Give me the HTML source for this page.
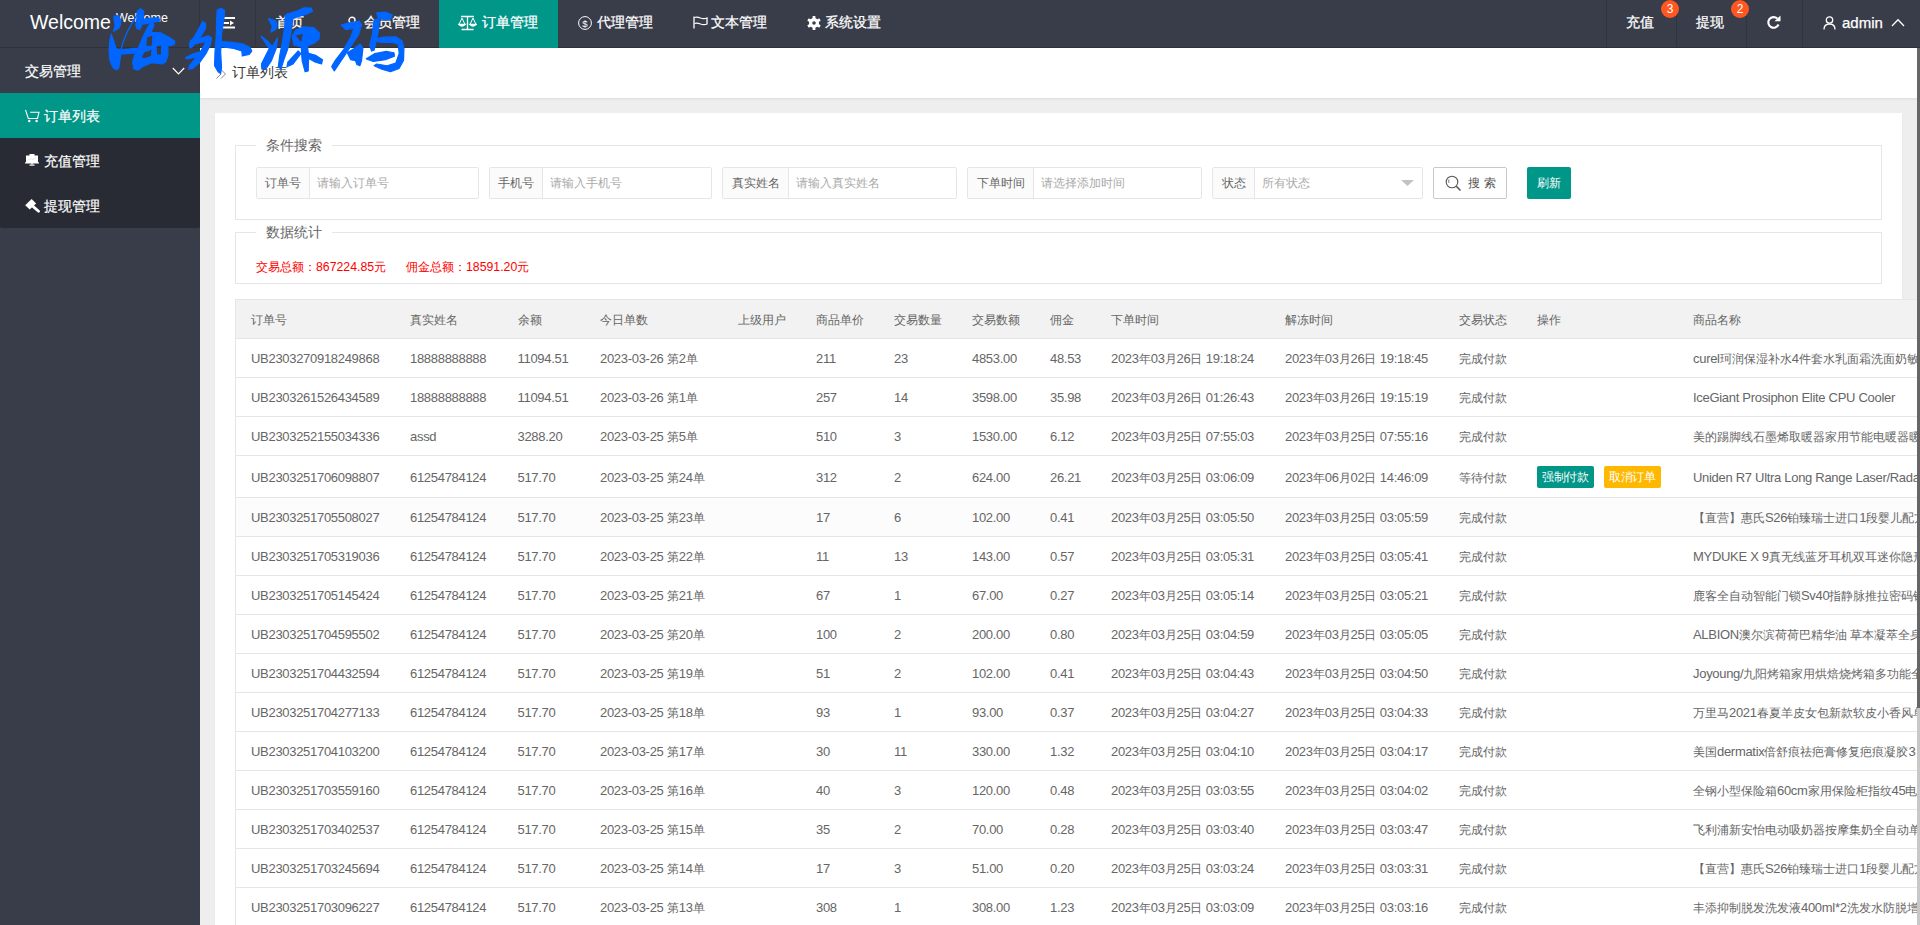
<!DOCTYPE html>
<html><head><meta charset="utf-8"><title>订单列表</title>
<style>
*{margin:0;padding:0;box-sizing:border-box}
html,body{width:1920px;height:925px;overflow:hidden}
body{position:relative;background:#eeeeee;font-family:"Liberation Sans",sans-serif;color:#666}
.hdr{position:absolute;left:0;top:0;width:1920px;height:48px;background:#393D49;color:#fff}
.hdr .sep{position:absolute;top:0;width:1px;height:48px;background:#30343e}
.hdr .t{position:absolute;top:0;line-height:45px;-webkit-text-stroke:0.25px #fff;font-size:14px;white-space:nowrap;color:#fff}
.hdr .ico{position:absolute}
.logo{position:absolute;left:30px;top:0;line-height:44px;font-size:19.5px;color:#fff}
.logo2{position:absolute;left:116px;top:8px;line-height:20px;font-size:12.5px;color:#fff}
.act{position:absolute;left:439px;top:0;width:119px;height:48px;background:#009688}
.badge{position:absolute;width:18px;height:18px;border-radius:9px;background:#FF5722;color:#fff;font-size:12px;line-height:18px;text-align:center}
.side{position:absolute;left:0;top:48px;width:200px;height:877px;background:#393D49}
.side .it{position:absolute;left:0;width:200px;height:45px;line-height:47px;color:#fff;font-size:14px;-webkit-text-stroke:0.2px #fff}
.side .child{position:absolute;left:0;top:45px;width:200px;height:135px;background:#282B33;border-radius:0 0 2px 2px}
.crumb{position:absolute;left:200px;top:48px;width:1717px;height:50px;background:#fff;box-shadow:0 1px 2px rgba(0,0,0,.08)}
.crumb .t{position:absolute;left:32px;top:0;line-height:48px;font-size:14px;color:#333}
.card{position:absolute;left:215px;top:113px;width:1687px;height:830px;background:#fff;box-shadow:0 1px 2px rgba(0,0,0,.05)}
.fs{position:absolute;border:1px solid #e6e6e6}
.fs .lg{position:absolute;top:-11px;background:#fff;padding:0 10px;font-size:14px;line-height:20px;color:#666}
.ig{position:absolute;top:167px;height:32px;border:1px solid #e6e6e6;border-radius:2px;background:#fff}
.ig .lb{position:absolute;left:0;top:0;height:30px;line-height:30px;background:#FBFBFB;border-right:1px solid #e6e6e6;font-size:12px;color:#666;text-align:center}
.ig .ph{position:absolute;top:0;line-height:30px;font-size:12px;color:#aaa;white-space:nowrap}
.btn-s{position:absolute;left:1433px;top:167px;width:74px;height:32px;border:1px solid #C9C9C9;border-radius:2px;background:#fff;color:#555}
.btn-r{position:absolute;left:1527px;top:167px;width:44px;height:32px;border-radius:2px;background:#009688;color:#fff;font-size:12px;line-height:32px;text-align:center}
.stat{position:absolute;top:258px;line-height:18px;font-size:12.3px;color:#FF0000;white-space:nowrap}
.tbl{position:absolute;left:235px;top:299px;width:1682px;height:626px;overflow:hidden;background:#fff;border-left:1px solid #e6e6e6}
.thead{position:absolute;left:0;top:0;width:100%;height:40px;background:#F2F2F2;border-top:1px solid #e6e6e6;border-bottom:1px solid #e6e6e6}
.tr{position:absolute;left:0;width:100%;border-bottom:1px solid #e6e6e6;background:#fff}
.tr.hov{background:#FCFCFC}
.c{position:absolute;top:1px;white-space:nowrap;font-size:13px;letter-spacing:-0.3px;color:#666}
.thead .c{line-height:38px}
.tr .c{line-height:inherit}
.btns{display:block}
.bx{font-style:normal;display:inline-block;vertical-align:top;margin-top:9px;height:22px;line-height:22px;padding:0 5px;font-size:12px;color:#fff;border-radius:2px;margin-right:10px}
.bx.g{background:#009688}.bx.o{background:#FFB800}
.sb{position:absolute;left:1917px;top:48px;width:3px;height:877px;background:#C8C8C8}
.sb i{position:absolute;left:0;top:0;width:3px;height:660px;background:#666}
.wm{position:absolute;left:0;top:0}
.c b.z{font-weight:normal;font-size:12px;letter-spacing:0}

</style></head><body>
<div class="hdr">
  <div style="position:absolute;left:0;top:47px;width:1920px;height:1px;background:#2f323c"></div>
  <div class="logo">Welcome</div>
  <div class="logo2">Welcome</div>
  <div class="sep" style="left:199px"></div>
  <div class="sep" style="left:255px"></div>
  <div class="act"></div>
  <!-- menu toggle -->
  <svg class="ico" style="left:222px;top:16px" width="14" height="14" viewBox="0 0 14 14"><rect x="2" y="1" width="11" height="2" fill="#fff"/><rect x="1" y="6" width="6" height="2" fill="#fff"/><path d="M8 4.6 L12 7 L8 9.4Z" fill="#fff"/><rect x="1" y="10.5" width="12" height="2" fill="#fff"/></svg>
  <div class="t" style="left:276px">首页</div>
  <!-- user icon -->
  <svg class="ico" style="left:345px;top:16px" width="14" height="14" viewBox="0 0 14 14" fill="none" stroke="#fff" stroke-width="1.4"><circle cx="7" cy="4.3" r="3"/><path d="M1.5 13.5 C1.5 9.5 4 7.8 7 7.8 C10 7.8 12.5 9.5 12.5 13.5"/></svg>
  <div class="t" style="left:364px">会员管理</div>
  <!-- scale icon -->
  <svg class="ico" style="left:458px;top:15px" width="19" height="16" viewBox="0 0 19 16" fill="none" stroke="#fff" stroke-width="1.3"><path d="M3 1.5 H16 M9.5 1 V14.5 M3.5 14.5 H15.5"/><path d="M4 3 L1 9.5 H7 Z M15 3 L12 9.5 H18 Z" stroke-width="1"/><path d="M1 9.5 Q4 12.5 7 9.5 Z M12 9.5 Q15 12.5 18 9.5 Z" fill="#fff"/></svg>
  <div class="t" style="left:482px">订单管理</div>
  <!-- dollar icon -->
  <svg class="ico" style="left:578px;top:16px" width="14" height="14" viewBox="0 0 14 14" fill="none" stroke="#fff" stroke-width="1"><circle cx="7" cy="7" r="6.4"/><text x="7" y="10.5" font-size="9.5" font-family="Liberation Sans" fill="#fff" stroke="none" text-anchor="middle">$</text></svg>
  <div class="t" style="left:597px">代理管理</div>
  <!-- flag icon -->
  <svg class="ico" style="left:693px;top:16px" width="15" height="13" viewBox="0 0 15 13" fill="none" stroke="#fff" stroke-width="1.3"><path d="M1 0.5 V12.5"/><path d="M1.5 1.5 Q4 0.5 7.5 2 Q11 3.3 14 2 V8 Q11 9.3 7.5 8 Q4 6.6 1.5 7.5"/></svg>
  <div class="t" style="left:711px">文本管理</div>
  <!-- gear icon -->
  <svg class="ico" style="left:807px;top:16px" width="14" height="14" viewBox="0 0 14 14"><g fill="#fff"><circle cx="7" cy="7" r="5"/><rect x="5.6" y="0" width="2.8" height="14" rx="0.6"/><rect x="5.6" y="0" width="2.8" height="14" rx="0.6" transform="rotate(60 7 7)"/><rect x="5.6" y="0" width="2.8" height="14" rx="0.6" transform="rotate(120 7 7)"/></g><circle cx="7" cy="7" r="1.8" fill="#393D49"/></svg>
  <div class="t" style="left:825px">系统设置</div>

  <div class="sep" style="left:1606px"></div>
  <div class="sep" style="left:1676px"></div>
  <div class="sep" style="left:1746px"></div>
  <div class="sep" style="left:1802px"></div>
  <div class="t" style="left:1626px">充值</div>
  <div class="badge" style="left:1661px;top:0px">3</div>
  <div class="t" style="left:1696px">提现</div>
  <div class="badge" style="left:1731px;top:0px">2</div>
  <!-- refresh -->
  <svg class="ico" style="left:1766px;top:15px" width="16" height="15" viewBox="0 0 16 15" fill="none"><path d="M12.5 9.5 A5.3 5.3 0 1 1 11.3 3.6" stroke="#fff" stroke-width="2.1"/><path d="M8.5 6.3 L14.5 6.3 L14.5 0.5 Z" fill="#fff"/></svg>
  <!-- user -->
  <svg class="ico" style="left:1823px;top:16px" width="13" height="14" viewBox="0 0 13 14" fill="none" stroke="#fff" stroke-width="1.3"><circle cx="6.5" cy="4" r="3.2"/><path d="M1 13.5 C1 9.7 3.4 8 6.5 8 C9.6 8 12 9.7 12 13.5"/></svg>
  <div class="t" style="left:1842px;font-size:15px">admin</div>
  <svg class="ico" style="left:1891px;top:18px" width="14" height="9" viewBox="0 0 14 9" fill="none" stroke="#fff" stroke-width="1.3"><path d="M1 8 L7 1.8 L13 8"/></svg>
</div>

<div class="side">
  <div class="it" style="top:0"><span style="position:absolute;left:25px">交易管理</span>
    <svg style="position:absolute;left:172px;top:19px" width="13" height="8" viewBox="0 0 13 8" fill="none" stroke="#fff" stroke-width="1.2"><path d="M0.8 1 L6.5 6.8 L12.2 1"/></svg></div>
  <div class="child"></div>
  <div class="it" style="top:45px;background:#009688">
    <svg style="position:absolute;left:25px;top:16px" width="15" height="14" viewBox="0 0 15 14" fill="none" stroke="#fff" stroke-width="1.1"><path d="M0.5 0.8 L3.3 9.5 H12.5 L14 3.3 H5.2"/><circle cx="4.3" cy="12" r="1.2" fill="#fff" stroke="none"/><circle cx="11.6" cy="12" r="1.2" fill="#fff" stroke="none"/></svg>
    <span style="position:absolute;left:44px">订单列表</span></div>
  <div class="it" style="top:90px">
    <svg style="position:absolute;left:25px;top:16px" width="14" height="12" viewBox="0 0 14 12"><rect x="1" y="1.5" width="12" height="7.5" fill="#fff"/><rect x="4.5" y="0" width="5" height="2" fill="#fff"/><rect x="0" y="8.3" width="14" height="1.2" fill="#fff"/><rect x="6.3" y="9" width="1.4" height="1.5" fill="#fff"/><rect x="4.5" y="10.5" width="5" height="1.2" fill="#fff"/><path d="M3 6 L5.5 4.6 L8 5.6 L11 3.5" stroke="#ddd" stroke-width="0.7" fill="none"/></svg>
    <span style="position:absolute;left:44px">充值管理</span></div>
  <div class="it" style="top:135px">
    <svg style="position:absolute;left:25px;top:15px" width="16" height="16" viewBox="0 0 16 16"><path d="M0.2,7.2 L6.6,1.1 L11.1,5.6 L4.7,11.5 Z" fill="#fff"/><path d="M8.2,8.6 L13.6,13.2" stroke="#fff" stroke-width="2.8" stroke-linecap="round"/></svg>
    <span style="position:absolute;left:44px">提现管理</span></div>
</div>

<div class="crumb">
  <svg style="position:absolute;left:16px;top:21px" width="11" height="10" viewBox="0 0 11 10" fill="none" stroke="#888" stroke-width="1"><path d="M0.5 9.5 L5 5 L0.5 0.5 M5 9.5 L9.5 5 L5 0.5"/></svg>
  <div class="t">订单列表</div>
</div>

<div class="card"></div>

<div class="fs" style="left:235px;top:145px;width:1647px;height:75px"><div class="lg" style="left:20px">条件搜索</div></div>
<div class="fs" style="left:235px;top:232px;width:1647px;height:52px"><div class="lg" style="left:20px">数据统计</div></div>

<div class="ig" style="left:256px;width:223px"><div class="lb" style="width:53px">订单号</div><div class="ph" style="left:60px">请输入订单号</div></div>
<div class="ig" style="left:489px;width:223px"><div class="lb" style="width:53px">手机号</div><div class="ph" style="left:60px">请输入手机号</div></div>
<div class="ig" style="left:722px;width:235px"><div class="lb" style="width:66px">真实姓名</div><div class="ph" style="left:73px">请输入真实姓名</div></div>
<div class="ig" style="left:967px;width:235px"><div class="lb" style="width:66px">下单时间</div><div class="ph" style="left:73px">请选择添加时间</div></div>
<div class="ig" style="left:1212px;width:211px"><div class="lb" style="width:42px">状态</div><div class="ph" style="left:49px">所有状态</div>
  <svg style="position:absolute;left:188px;top:12px" width="13" height="6" viewBox="0 0 13 6"><path d="M0 0 H13 L6.5 6 Z" fill="#c2c2c2"/></svg></div>
<div class="btn-s">
  <svg style="position:absolute;left:11px;top:7px" width="17" height="17" viewBox="0 0 17 17" fill="none" stroke="#555" stroke-width="1.1"><circle cx="7" cy="7" r="5.8"/><path d="M11.3 11.3 L15.5 15.5" stroke-width="1.6"/><path d="M4 4.5 Q3.3 6 4 8" stroke-width="0.8"/></svg>
  <span style="position:absolute;left:34px;top:0;line-height:30px;font-size:12px;letter-spacing:4px">搜索</span>
</div>
<div class="btn-r">刷新</div>

<div class="stat" style="left:256px">交易总额：867224.85元</div>
<div class="stat" style="left:406px">佣金总额：18591.20元</div>

<div class="tbl"><div class="thead"><span class="c" style="left:15px"><b class="z">订单号</b></span><span class="c" style="left:174px"><b class="z">真实姓名</b></span><span class="c" style="left:281.5px"><b class="z">余额</b></span><span class="c" style="left:364px"><b class="z">今日单数</b></span><span class="c" style="left:502px"><b class="z">上级用户</b></span><span class="c" style="left:580px"><b class="z">商品单价</b></span><span class="c" style="left:658px"><b class="z">交易数量</b></span><span class="c" style="left:736px"><b class="z">交易数额</b></span><span class="c" style="left:814px"><b class="z">佣金</b></span><span class="c" style="left:875px"><b class="z">下单时间</b></span><span class="c" style="left:1049px"><b class="z">解冻时间</b></span><span class="c" style="left:1223px"><b class="z">交易状态</b></span><span class="c" style="left:1301px"><b class="z">操作</b></span><span class="c" style="left:1457px"><b class="z">商品名称</b></span></div><div class="tr" style="top:40px;height:39px;line-height:38px"><span class="c" style="left:15px">UB2303270918249868</span><span class="c" style="left:174px">18888888888</span><span class="c" style="left:281.5px">11094.51</span><span class="c" style="left:364px">2023-03-26 <b class="z">第</b>2<b class="z">单</b></span><span class="c" style="left:580px">211</span><span class="c" style="left:658px">23</span><span class="c" style="left:736px">4853.00</span><span class="c" style="left:814px">48.53</span><span class="c" style="left:875px">2023<b class="z">年</b>03<b class="z">月</b>26<b class="z">日</b> 19:18:24</span><span class="c" style="left:1049px">2023<b class="z">年</b>03<b class="z">月</b>26<b class="z">日</b> 19:18:45</span><span class="c" style="left:1223px"><b class="z">完成付款</b></span><span class="c" style="left:1457px">curel<b class="z">珂润保湿补水</b>4<b class="z">件套水乳面霜洗面奶敏感肌</b></span></div><div class="tr" style="top:79px;height:39px;line-height:38px"><span class="c" style="left:15px">UB2303261526434589</span><span class="c" style="left:174px">18888888888</span><span class="c" style="left:281.5px">11094.51</span><span class="c" style="left:364px">2023-03-26 <b class="z">第</b>1<b class="z">单</b></span><span class="c" style="left:580px">257</span><span class="c" style="left:658px">14</span><span class="c" style="left:736px">3598.00</span><span class="c" style="left:814px">35.98</span><span class="c" style="left:875px">2023<b class="z">年</b>03<b class="z">月</b>26<b class="z">日</b> 01:26:43</span><span class="c" style="left:1049px">2023<b class="z">年</b>03<b class="z">月</b>26<b class="z">日</b> 19:15:19</span><span class="c" style="left:1223px"><b class="z">完成付款</b></span><span class="c" style="left:1457px">IceGiant Prosiphon Elite CPU Cooler</span></div><div class="tr" style="top:118px;height:39px;line-height:38px"><span class="c" style="left:15px">UB2303252155034336</span><span class="c" style="left:174px">assd</span><span class="c" style="left:281.5px">3288.20</span><span class="c" style="left:364px">2023-03-25 <b class="z">第</b>5<b class="z">单</b></span><span class="c" style="left:580px">510</span><span class="c" style="left:658px">3</span><span class="c" style="left:736px">1530.00</span><span class="c" style="left:814px">6.12</span><span class="c" style="left:875px">2023<b class="z">年</b>03<b class="z">月</b>25<b class="z">日</b> 07:55:03</span><span class="c" style="left:1049px">2023<b class="z">年</b>03<b class="z">月</b>25<b class="z">日</b> 07:55:16</span><span class="c" style="left:1223px"><b class="z">完成付款</b></span><span class="c" style="left:1457px"><b class="z">美的踢脚线石墨烯取暖器家用节能电暖器暖风机</b></span></div><div class="tr" style="top:157px;height:42px;line-height:41px"><span class="c" style="left:15px">UB2303251706098807</span><span class="c" style="left:174px">61254784124</span><span class="c" style="left:281.5px">517.70</span><span class="c" style="left:364px">2023-03-25 <b class="z">第</b>24<b class="z">单</b></span><span class="c" style="left:580px">312</span><span class="c" style="left:658px">2</span><span class="c" style="left:736px">624.00</span><span class="c" style="left:814px">26.21</span><span class="c" style="left:875px">2023<b class="z">年</b>03<b class="z">月</b>25<b class="z">日</b> 03:06:09</span><span class="c" style="left:1049px">2023<b class="z">年</b>06<b class="z">月</b>02<b class="z">日</b> 14:46:09</span><span class="c" style="left:1223px"><b class="z">等待付款</b></span><span class="c btns" style="left:1301px"><i class="bx g">强制付款</i><i class="bx o">取消订单</i></span><span class="c" style="left:1457px">Uniden R7 Ultra Long Range Laser/Radar Detector</span></div><div class="tr hov" style="top:199px;height:39px;line-height:38px"><span class="c" style="left:15px">UB2303251705508027</span><span class="c" style="left:174px">61254784124</span><span class="c" style="left:281.5px">517.70</span><span class="c" style="left:364px">2023-03-25 <b class="z">第</b>23<b class="z">单</b></span><span class="c" style="left:580px">17</span><span class="c" style="left:658px">6</span><span class="c" style="left:736px">102.00</span><span class="c" style="left:814px">0.41</span><span class="c" style="left:875px">2023<b class="z">年</b>03<b class="z">月</b>25<b class="z">日</b> 03:05:50</span><span class="c" style="left:1049px">2023<b class="z">年</b>03<b class="z">月</b>25<b class="z">日</b> 03:05:59</span><span class="c" style="left:1223px"><b class="z">完成付款</b></span><span class="c" style="left:1457px"><b class="z">【直营】惠氏</b>S26<b class="z">铂臻瑞士进口</b>1<b class="z">段婴儿配方奶粉</b></span></div><div class="tr" style="top:238px;height:39px;line-height:38px"><span class="c" style="left:15px">UB2303251705319036</span><span class="c" style="left:174px">61254784124</span><span class="c" style="left:281.5px">517.70</span><span class="c" style="left:364px">2023-03-25 <b class="z">第</b>22<b class="z">单</b></span><span class="c" style="left:580px">11</span><span class="c" style="left:658px">13</span><span class="c" style="left:736px">143.00</span><span class="c" style="left:814px">0.57</span><span class="c" style="left:875px">2023<b class="z">年</b>03<b class="z">月</b>25<b class="z">日</b> 03:05:31</span><span class="c" style="left:1049px">2023<b class="z">年</b>03<b class="z">月</b>25<b class="z">日</b> 03:05:41</span><span class="c" style="left:1223px"><b class="z">完成付款</b></span><span class="c" style="left:1457px">MYDUKE X 9<b class="z">真无线蓝牙耳机双耳迷你隐形入耳式</b></span></div><div class="tr" style="top:277px;height:39px;line-height:38px"><span class="c" style="left:15px">UB2303251705145424</span><span class="c" style="left:174px">61254784124</span><span class="c" style="left:281.5px">517.70</span><span class="c" style="left:364px">2023-03-25 <b class="z">第</b>21<b class="z">单</b></span><span class="c" style="left:580px">67</span><span class="c" style="left:658px">1</span><span class="c" style="left:736px">67.00</span><span class="c" style="left:814px">0.27</span><span class="c" style="left:875px">2023<b class="z">年</b>03<b class="z">月</b>25<b class="z">日</b> 03:05:14</span><span class="c" style="left:1049px">2023<b class="z">年</b>03<b class="z">月</b>25<b class="z">日</b> 03:05:21</span><span class="c" style="left:1223px"><b class="z">完成付款</b></span><span class="c" style="left:1457px"><b class="z">鹿客全自动智能门锁</b>Sv40<b class="z">指静脉推拉密码锁</b></span></div><div class="tr" style="top:316px;height:39px;line-height:38px"><span class="c" style="left:15px">UB2303251704595502</span><span class="c" style="left:174px">61254784124</span><span class="c" style="left:281.5px">517.70</span><span class="c" style="left:364px">2023-03-25 <b class="z">第</b>20<b class="z">单</b></span><span class="c" style="left:580px">100</span><span class="c" style="left:658px">2</span><span class="c" style="left:736px">200.00</span><span class="c" style="left:814px">0.80</span><span class="c" style="left:875px">2023<b class="z">年</b>03<b class="z">月</b>25<b class="z">日</b> 03:04:59</span><span class="c" style="left:1049px">2023<b class="z">年</b>03<b class="z">月</b>25<b class="z">日</b> 03:05:05</span><span class="c" style="left:1223px"><b class="z">完成付款</b></span><span class="c" style="left:1457px">ALBION<b class="z">澳尔滨荷荷巴精华油</b> <b class="z">草本凝萃全身</b></span></div><div class="tr" style="top:355px;height:39px;line-height:38px"><span class="c" style="left:15px">UB2303251704432594</span><span class="c" style="left:174px">61254784124</span><span class="c" style="left:281.5px">517.70</span><span class="c" style="left:364px">2023-03-25 <b class="z">第</b>19<b class="z">单</b></span><span class="c" style="left:580px">51</span><span class="c" style="left:658px">2</span><span class="c" style="left:736px">102.00</span><span class="c" style="left:814px">0.41</span><span class="c" style="left:875px">2023<b class="z">年</b>03<b class="z">月</b>25<b class="z">日</b> 03:04:43</span><span class="c" style="left:1049px">2023<b class="z">年</b>03<b class="z">月</b>25<b class="z">日</b> 03:04:50</span><span class="c" style="left:1223px"><b class="z">完成付款</b></span><span class="c" style="left:1457px">Joyoung/<b class="z">九阳烤箱家用烘焙烧烤箱多功能全自动</b></span></div><div class="tr" style="top:394px;height:39px;line-height:38px"><span class="c" style="left:15px">UB2303251704277133</span><span class="c" style="left:174px">61254784124</span><span class="c" style="left:281.5px">517.70</span><span class="c" style="left:364px">2023-03-25 <b class="z">第</b>18<b class="z">单</b></span><span class="c" style="left:580px">93</span><span class="c" style="left:658px">1</span><span class="c" style="left:736px">93.00</span><span class="c" style="left:814px">0.37</span><span class="c" style="left:875px">2023<b class="z">年</b>03<b class="z">月</b>25<b class="z">日</b> 03:04:27</span><span class="c" style="left:1049px">2023<b class="z">年</b>03<b class="z">月</b>25<b class="z">日</b> 03:04:33</span><span class="c" style="left:1223px"><b class="z">完成付款</b></span><span class="c" style="left:1457px"><b class="z">万里马</b>2021<b class="z">春夏羊皮女包新款软皮小香风单肩</b></span></div><div class="tr" style="top:433px;height:39px;line-height:38px"><span class="c" style="left:15px">UB2303251704103200</span><span class="c" style="left:174px">61254784124</span><span class="c" style="left:281.5px">517.70</span><span class="c" style="left:364px">2023-03-25 <b class="z">第</b>17<b class="z">单</b></span><span class="c" style="left:580px">30</span><span class="c" style="left:658px">11</span><span class="c" style="left:736px">330.00</span><span class="c" style="left:814px">1.32</span><span class="c" style="left:875px">2023<b class="z">年</b>03<b class="z">月</b>25<b class="z">日</b> 03:04:10</span><span class="c" style="left:1049px">2023<b class="z">年</b>03<b class="z">月</b>25<b class="z">日</b> 03:04:17</span><span class="c" style="left:1223px"><b class="z">完成付款</b></span><span class="c" style="left:1457px"><b class="z">美国</b>dermatix<b class="z">倍舒痕祛疤膏修复疤痕凝胶</b>3</span></div><div class="tr" style="top:472px;height:39px;line-height:38px"><span class="c" style="left:15px">UB2303251703559160</span><span class="c" style="left:174px">61254784124</span><span class="c" style="left:281.5px">517.70</span><span class="c" style="left:364px">2023-03-25 <b class="z">第</b>16<b class="z">单</b></span><span class="c" style="left:580px">40</span><span class="c" style="left:658px">3</span><span class="c" style="left:736px">120.00</span><span class="c" style="left:814px">0.48</span><span class="c" style="left:875px">2023<b class="z">年</b>03<b class="z">月</b>25<b class="z">日</b> 03:03:55</span><span class="c" style="left:1049px">2023<b class="z">年</b>03<b class="z">月</b>25<b class="z">日</b> 03:04:02</span><span class="c" style="left:1223px"><b class="z">完成付款</b></span><span class="c" style="left:1457px"><b class="z">全钢小型保险箱</b>60cm<b class="z">家用保险柜指纹</b>45<b class="z">电子</b></span></div><div class="tr" style="top:511px;height:39px;line-height:38px"><span class="c" style="left:15px">UB2303251703402537</span><span class="c" style="left:174px">61254784124</span><span class="c" style="left:281.5px">517.70</span><span class="c" style="left:364px">2023-03-25 <b class="z">第</b>15<b class="z">单</b></span><span class="c" style="left:580px">35</span><span class="c" style="left:658px">2</span><span class="c" style="left:736px">70.00</span><span class="c" style="left:814px">0.28</span><span class="c" style="left:875px">2023<b class="z">年</b>03<b class="z">月</b>25<b class="z">日</b> 03:03:40</span><span class="c" style="left:1049px">2023<b class="z">年</b>03<b class="z">月</b>25<b class="z">日</b> 03:03:47</span><span class="c" style="left:1223px"><b class="z">完成付款</b></span><span class="c" style="left:1457px"><b class="z">飞利浦新安怡电动吸奶器按摩集奶全自动单边</b></span></div><div class="tr" style="top:550px;height:39px;line-height:38px"><span class="c" style="left:15px">UB2303251703245694</span><span class="c" style="left:174px">61254784124</span><span class="c" style="left:281.5px">517.70</span><span class="c" style="left:364px">2023-03-25 <b class="z">第</b>14<b class="z">单</b></span><span class="c" style="left:580px">17</span><span class="c" style="left:658px">3</span><span class="c" style="left:736px">51.00</span><span class="c" style="left:814px">0.20</span><span class="c" style="left:875px">2023<b class="z">年</b>03<b class="z">月</b>25<b class="z">日</b> 03:03:24</span><span class="c" style="left:1049px">2023<b class="z">年</b>03<b class="z">月</b>25<b class="z">日</b> 03:03:31</span><span class="c" style="left:1223px"><b class="z">完成付款</b></span><span class="c" style="left:1457px"><b class="z">【直营】惠氏</b>S26<b class="z">铂臻瑞士进口</b>1<b class="z">段婴儿配方奶粉</b></span></div><div class="tr" style="top:589px;height:39px;line-height:38px"><span class="c" style="left:15px">UB2303251703096227</span><span class="c" style="left:174px">61254784124</span><span class="c" style="left:281.5px">517.70</span><span class="c" style="left:364px">2023-03-25 <b class="z">第</b>13<b class="z">单</b></span><span class="c" style="left:580px">308</span><span class="c" style="left:658px">1</span><span class="c" style="left:736px">308.00</span><span class="c" style="left:814px">1.23</span><span class="c" style="left:875px">2023<b class="z">年</b>03<b class="z">月</b>25<b class="z">日</b> 03:03:09</span><span class="c" style="left:1049px">2023<b class="z">年</b>03<b class="z">月</b>25<b class="z">日</b> 03:03:16</span><span class="c" style="left:1223px"><b class="z">完成付款</b></span><span class="c" style="left:1457px"><b class="z">丰添抑制脱发洗发液</b>400ml*2<b class="z">洗发水防脱增发</b></span></div></div>

<div class="sb"><i></i></div>
<svg class="wm" width="420" height="90" viewBox="0 0 420 90">
<g fill="#0066FF" stroke="#0066FF" stroke-width="14" stroke-linejoin="round" fill-rule="evenodd">
<g transform="translate(100 0) scale(0.0864865)">
<path d="M160,190 L215,180 L240,240 L235,290 L215,330 L155,360 L175,300 L165,240 Z"/>
<path d="M130,395 L150,450 L185,560 L235,580 L400,560 L470,555 L560,545 L565,585 L470,600 L380,615 L240,625 L230,700 L215,790 L190,805 L150,780 L115,700 L105,580 L115,470 Z"/>
<path d="M238,592 Q285,365 470,110" fill="none" stroke-width="15"/>
<path d="M430,130 L470,100 L505,130 L500,200 L480,300 L460,340 L425,330 L415,290 L430,200 Z"/>
<path d="M480,225 L600,210 L680,205 L690,245 L600,260 L500,280 Z"/>
<path d="M600,250 L625,290 L590,375 L700,380 L800,435 L862,475 L862,510 L815,528 L785,520 L785,640 L760,715 L720,740 L600,725 L500,765 L440,810 L390,795 L378,720 L400,640 L450,540 L500,420 L560,300 Z M538,428 L612,405 L606,532 L528,537 Z M468,672 L514,592 L602,562 L597,652 L524,678 Z M648,535 L712,513 L712,637 L653,637 Z"/>
</g>
<g transform="translate(180 0) scale(0.0864865)">
<path d="M260,250 L295,270 L295,330 L240,420 L175,490 L145,540 L115,555 L110,500 L170,420 L235,300 Z"/>
<path d="M120,470 L240,440 L330,415 L365,440 L350,520 L300,620 L230,720 L150,790 L100,800 L110,760 L200,650 L270,540 L300,480 L200,500 L135,520 Z"/>
<path d="M65,665 L160,620 L240,600 L250,640 L180,660 L80,680 Z"/>
<path d="M430,120 L470,95 L515,120 L510,200 L480,400 L470,600 L480,780 L470,850 L440,830 L400,760 L405,600 L420,400 L425,200 Z"/>
<path d="M480,480 L600,490 L730,510 L810,550 L830,590 L800,630 L720,645 L715,590 L620,560 L480,540 Z"/>
</g>
<g transform="translate(255 0) scale(0.0864865)">
<path d="M155,215 L240,240 L255,290 L240,340 L185,370 L200,300 Z"/>
<path d="M70,420 L150,480 L200,540 L260,440 L245,560 L190,700 L130,790 L80,800 L75,740 L120,650 L165,560 Z"/>
<path d="M360,165 L480,130 L570,90 L650,95 L665,130 L600,160 L480,200 L380,225 Z"/>
<path d="M350,180 L440,200 L420,350 L380,560 L330,700 L300,800 L270,770 L285,650 L320,470 L345,300 Z"/>
<path d="M430,420 L470,350 L560,310 L680,320 L745,380 L740,450 L680,500 L600,530 L520,540 L450,520 Z M462,405 L562,382 L537,508 Z"/>
<path d="M530,480 L600,480 L620,650 L615,820 L580,830 L545,700 Z"/>
<path d="M500,590 L530,620 L440,740 L370,770 L380,720 Z"/>
<path d="M600,610 L700,640 L780,690 L770,740 L700,720 L610,670 Z"/>
</g>
<g transform="translate(330 0) scale(0.0864865)">
<path d="M130,290 L200,270 L340,245 L360,290 L260,330 L180,340 Z"/>
<path d="M300,260 L365,280 L330,400 L250,520 L170,640 L90,760 L50,820 L20,770 L60,700 L160,570 L240,430 Z"/>
<path d="M200,610 L280,560 L350,510 L380,560 L365,700 L345,760 L310,745 L295,700 L240,690 Z"/>
<path d="M540,150 L640,140 L720,175 L700,220 L640,230 L560,210 Z"/>
<path d="M510,230 L570,215 L560,350 L540,450 L510,580 L480,590 L460,520 L490,400 Z"/>
<path d="M530,450 L620,430 L760,425 L830,470 L855,560 L850,700 L800,790 L700,830 L600,800 L510,760 L540,740 L660,760 L760,730 L800,620 L790,510 L720,490 L600,490 L540,480 Z"/>
<path d="M420,680 L520,620 L650,595 L740,610 L745,650 L640,690 L500,710 Z"/>
</g>
</g></svg>


</body></html>
